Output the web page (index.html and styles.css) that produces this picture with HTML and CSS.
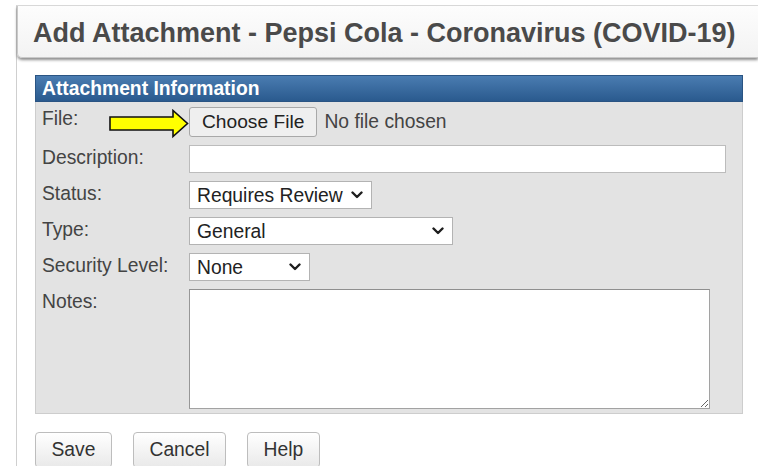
FILE: index.html
```html
<!DOCTYPE html>
<html lang="en">
<head>
<meta charset="utf-8">
<title>Add Attachment</title>
<link rel="stylesheet" href="styles.css">
</head>
<body>
<div class="page">
  <header class="page-head">
    <h1>Add Attachment - Pepsi Cola - Coronavirus (COVID-19)</h1>
  </header>
  <div class="content">
    <form class="panel">
      <div class="panel-title">Attachment Information</div>
      <div class="fields">
        <label class="field-label field-label--file">File:</label>
        <div class="file-pick">
          <button type="button" class="file-btn">Choose File</button>
          <span class="file-name">No file chosen</span>
        </div>

        <label class="field-label" for="desc">Description:</label>
        <input class="text-input" id="desc" type="text">

        <label class="field-label" for="status">Status:</label>
        <div class="select select--status">
          <select id="status"><option>Requires Review</option></select>
          <svg class="chev" viewBox="0 0 12 8" width="12" height="8"><polyline points="1.5,1.5 6,6 10.5,1.5"/></svg>
        </div>

        <label class="field-label" for="type">Type:</label>
        <div class="select select--type">
          <select id="type"><option>General</option></select>
          <svg class="chev" viewBox="0 0 12 8" width="12" height="8"><polyline points="1.5,1.5 6,6 10.5,1.5"/></svg>
        </div>

        <label class="field-label" for="sec">Security Level:</label>
        <div class="select select--sec">
          <select id="sec"><option>None</option></select>
          <svg class="chev" viewBox="0 0 12 8" width="12" height="8"><polyline points="1.5,1.5 6,6 10.5,1.5"/></svg>
        </div>

        <label class="field-label" for="notes">Notes:</label>
        <textarea class="notes" id="notes"></textarea>
      </div>

      <!-- pointer callout next to the file button -->
      <svg class="callout" viewBox="0 0 80 30" width="80" height="30">
        <polygon points="1,8 64,8 64,1.5 78.5,14.5 64,27.5 64,21 1,21"/>
      </svg>
    </form>

    <div class="actions">
      <button type="button" class="btn">Save</button>
      <button type="button" class="btn">Cancel</button>
      <button type="button" class="btn">Help</button>
    </div>
  </div>
</div>
</body>
</html>
```

FILE: styles.css
```css
html, body {
  margin: 0;
  padding: 0;
  background: #ffffff;
  overflow: hidden;
}

body {
  font-family: "Liberation Sans", Arial, sans-serif;
  color: #444;
}

.page {
  margin: 5px 0 0 16px;
  min-height: 480px;
  border-left: 1px solid #cfcfcf;
  border-top: 1px solid #dcdcdc;
}

/* title strip; runs on past the right edge of the window */
.page-head {
  box-sizing: border-box;
  height: 52px;
  padding: 12px 0 0 15px;
  background: linear-gradient(#fdfdfd, #f3f3f3);
  border: 1px solid #c9c9c9;
  border-top: 0;
  border-right: 0;
  border-radius: 0 0 0 5px;
  box-shadow: 0 2px 3px rgba(0, 0, 0, 0.45);
}

.page-head h1 {
  margin: 0;
  font-size: 27px;
  line-height: 31px;
  font-weight: bold;
  color: #4a4a4a;
  white-space: nowrap;
}

.content {
  padding: 17px 0 0 18px;
}

.panel {
  position: relative;
  width: 708px;
  box-sizing: border-box;
  margin: 0;
  background: #e3e3e3;
  border: 1px solid #cdcdcd;
  border-top: 0;
}

.panel-title {
  box-sizing: border-box;
  height: 27px;
  margin: 0 -1px;
  padding: 0 0 0 6px;
  background: linear-gradient(#4a7cb1, #2a5a8e);
  border: 1px solid #2a5483;
  color: #ffffff;
  font-size: 19.3px;
  font-weight: bold;
  line-height: 25px;
}

.fields {
  display: grid;
  grid-template-columns: 147px 1fr;
  grid-template-rows: 30px 28px 28px 28px 28px 120px;
  row-gap: 8px;
  padding: 5px 16px 4px 6px;
}

.field-label {
  align-self: start;
  padding-top: 2px;
  font-size: 19.3px;
  line-height: 22px;
  color: #444;
}

.field-label--file {
  padding-top: 1px;
}

.file-pick {
  display: flex;
  align-items: center;
}

.file-btn {
  box-sizing: border-box;
  height: 30px;
  padding: 0 12px;
  margin: 0;
  font-family: inherit;
  font-size: 19.2px;
  color: #222;
  background: #efefef;
  border: 1px solid #a8a8a8;
  border-radius: 3px;
}

.file-name {
  margin-left: 7px;
  font-size: 19.3px;
  color: #444;
}

.text-input {
  box-sizing: border-box;
  width: 537px;
  height: 28px;
  margin: 0;
  padding: 0 6px;
  font-family: inherit;
  font-size: 18px;
  background: #ffffff;
  border: 1px solid #bcbcbc;
}

.select {
  box-sizing: border-box;
  display: flex;
  align-items: center;
  height: 28px;
  background: #ffffff;
  border: 1px solid #b3b3b3;
}

.select--status { width: 183px; }
.select--type { width: 264px; }
.select--sec { width: 121px; }

.select select {
  flex: 1;
  min-width: 0;
  height: 100%;
  margin: 0;
  padding: 0 0 0 7px;
  border: 0;
  background: transparent;
  appearance: none;
  -webkit-appearance: none;
  font-family: inherit;
  font-size: 19.3px;
  color: #222;
  outline: none;
}

.chev {
  flex: none;
  margin: 0 8px 0 2px;
  fill: none;
  stroke: #1e1e1e;
  stroke-width: 2.4;
  stroke-linecap: round;
  stroke-linejoin: round;
}

.notes {
  box-sizing: border-box;
  width: 521px;
  height: 120px;
  margin: 0;
  padding: 4px;
  font-family: inherit;
  font-size: 16px;
  background: #ffffff;
  border: 1px solid #a2a2a2;
  border-top-color: #8f8f8f;
  border-left-color: #979797;
}

.callout {
  position: absolute;
  left: 73px;
  top: 34px;
}

.callout polygon {
  fill: #ffff00;
  stroke: #111;
  stroke-width: 1.6;
  stroke-linejoin: miter;
}

.actions {
  display: flex;
  gap: 21px;
  margin-top: 18px;
}

.btn {
  box-sizing: border-box;
  height: 36px;
  padding: 0 15.5px;
  margin: 0;
  font-family: inherit;
  font-size: 19.3px;
  color: #333;
  background: linear-gradient(#ffffff, #e9e9e9);
  border: 1px solid #bdbdbd;
  border-radius: 4px;
}
```
